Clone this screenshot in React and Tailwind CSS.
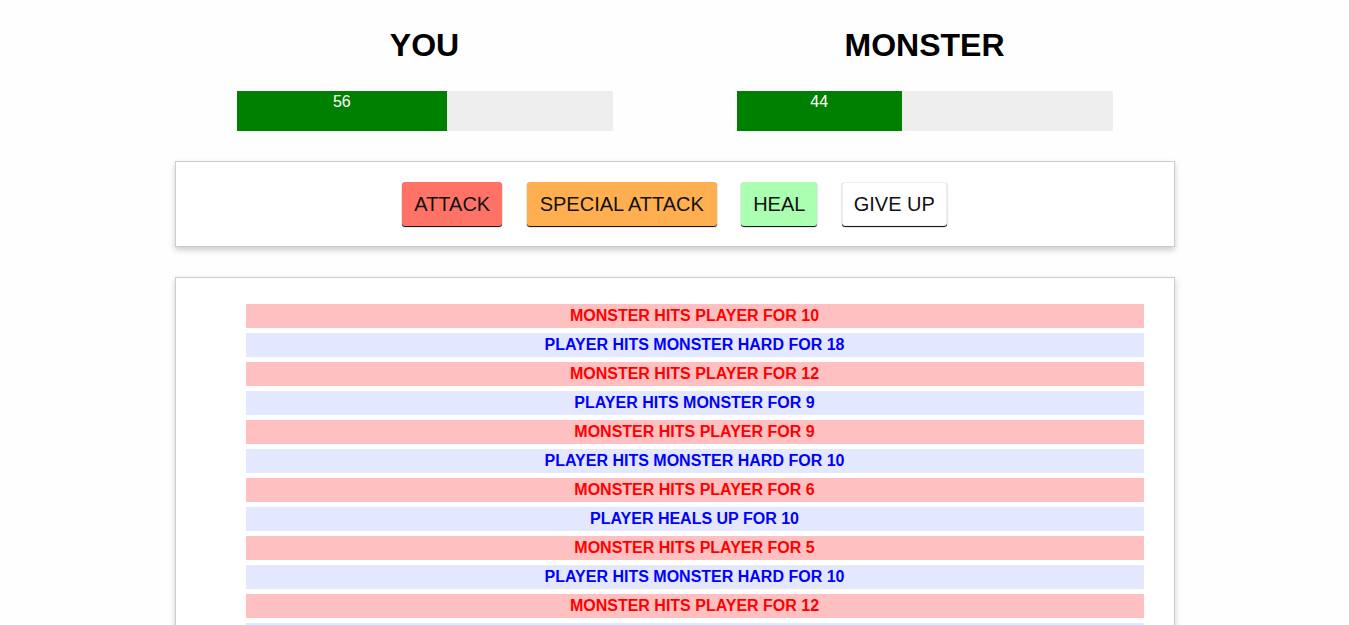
import React from "react";

const logs = [
  { m: true, t: "MONSTER HITS PLAYER FOR 10" },
  { m: false, t: "PLAYER HITS MONSTER HARD FOR 18" },
  { m: true, t: "MONSTER HITS PLAYER FOR 12" },
  { m: false, t: "PLAYER HITS MONSTER FOR 9" },
  { m: true, t: "MONSTER HITS PLAYER FOR 9" },
  { m: false, t: "PLAYER HITS MONSTER HARD FOR 10" },
  { m: true, t: "MONSTER HITS PLAYER FOR 6" },
  { m: false, t: "PLAYER HEALS UP FOR 10" },
  { m: true, t: "MONSTER HITS PLAYER FOR 5" },
  { m: false, t: "PLAYER HITS MONSTER HARD FOR 10" },
  { m: true, t: "MONSTER HITS PLAYER FOR 12" },
  { m: false, t: "PLAYER HITS MONSTER FOR 7" },
];

function Side({ name, value }) {
  return (
    <div className="w-1/2 flex flex-col items-center pt-[27px]">
      <h1 className="text-[32px] leading-[36px] font-bold text-black">{name}</h1>
      <div className="mt-[28px] w-[376px] h-[40px] bg-[#eeeeee]">
        <div
          className="h-full bg-[#008000] text-white text-[16px] leading-[18px] pt-[2px] text-center"
          style={{ width: `${value}%` }}
        >
          {value}
        </div>
      </div>
    </div>
  );
}

export default function App() {
  return (
    <div
      className="min-h-screen bg-[#fefefe] pb-10"
      style={{ fontFamily: '"Liberation Sans", Arial, sans-serif' }}
    >
      <div className="w-[1000px] mx-auto">
        <div className="flex">
          <Side name="YOU" value={56} />
          <Side name="MONSTER" value={44} />
        </div>

        <div className="mt-[30px] h-[86px] bg-white border border-[#cccccc] shadow-[0_3px_6px_#cccccc] flex justify-center items-start pt-[20px] gap-[24.5px]">
          <button className="h-[44px] w-[100px] rounded-[3px] bg-[#ff7367] text-[20px] text-[#111] shadow-[0_1px_1px_#000]">
            ATTACK
          </button>
          <button className="h-[44px] w-[190px] rounded-[3px] bg-[#ffaf4f] text-[20px] text-[#111] shadow-[0_1px_1px_#000]">
            SPECIAL ATTACK
          </button>
          <button className="h-[44px] w-[76px] rounded-[3px] bg-[#aaffb0] text-[20px] text-[#111] shadow-[0_1px_1px_#000]">
            HEAL
          </button>
          <button className="h-[44px] w-[105px] rounded-[3px] bg-white text-[20px] text-[#111] shadow-[0_1px_1px_#000] border border-[#f0f0f0]">
            GIVE UP
          </button>
        </div>

        <div className="mt-[30px] bg-white border border-[#cccccc] shadow-[0_3px_6px_#cccccc] pt-[26px] pb-[26px] pl-[70px] pr-[30px]">
          <ul className="flex flex-col gap-[5px]">
            {logs.map((l, i) => (
              <li
                key={i}
                className={
                  l.m
                    ? "h-[24px] leading-[24px] text-center text-[16px] font-bold text-[#ff0000] bg-[#ffc0c1]"
                    : "h-[24px] leading-[24px] text-center text-[16px] font-bold text-[#0000ff] bg-[#e4e8ff]"
                }
              >
                {l.t}
              </li>
            ))}
          </ul>
        </div>
      </div>
    </div>
  );
}
